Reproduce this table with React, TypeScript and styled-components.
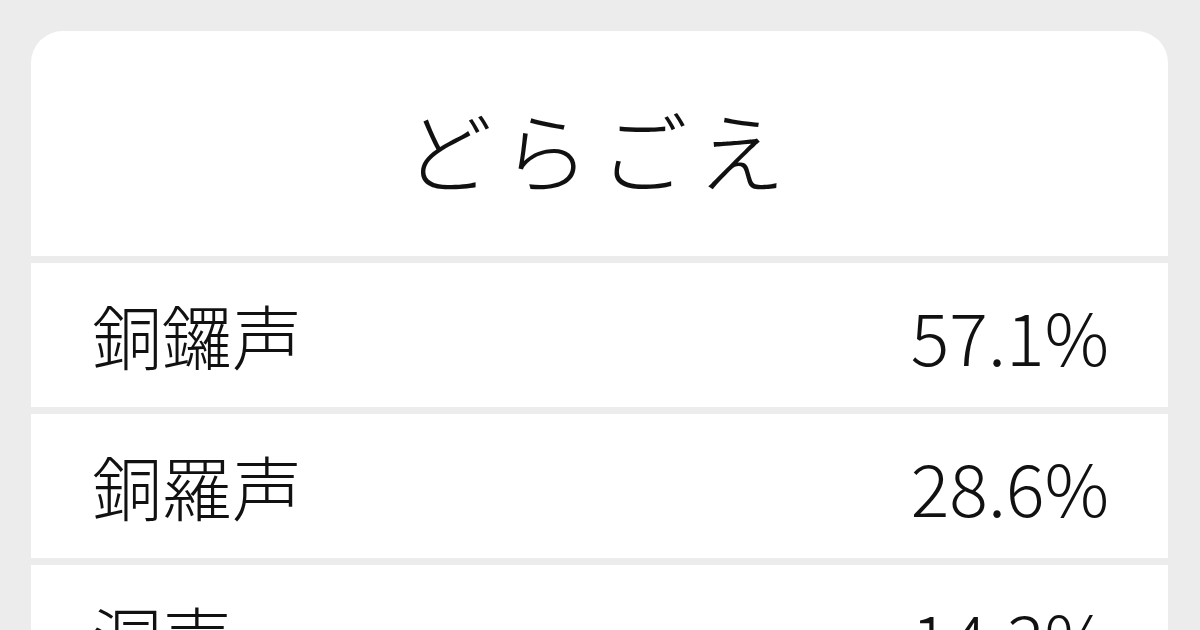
import React from "react";
import styled, { createGlobalStyle } from "styled-components";

const GlobalStyle = createGlobalStyle`
  html, body {
    margin: 0;
    padding: 0;
    background: #ececec;
  }
  body {
    font-family: "Noto Sans CJK JP", "Noto Sans", sans-serif;
    color: #111;
  }
`;

const Page = styled.div`
  width: 1200px;
  height: 630px;
  overflow: hidden;
  padding: 31px 32px 0 31px;
  box-sizing: border-box;
`;

const Card = styled.div`
  display: flex;
  flex-direction: column;
  gap: 7px;
  border-radius: 32px 32px 0 0;
  overflow: hidden;
`;

const TitleBlock = styled.div`
  height: 225px;
  background: #fff;
  display: flex;
  justify-content: center;
  align-items: center;
  padding-top: 8px;
  box-sizing: border-box;
`;

const Title = styled.h1`
  margin: 0;
  font-size: 88px;
  font-weight: 300;
  letter-spacing: 0.11em;
  line-height: 1;
`;

const Row = styled.div`
  height: 144px;
  background: #fff;
  display: flex;
  justify-content: space-between;
  align-items: center;
  padding: 0 59px 0 61px;
  box-sizing: border-box;
  font-weight: 300;
  line-height: 1;
`;

const Word = styled.span`
  font-size: 70px;
`;

const Rate = styled.span`
  font-size: 72px;
`;

const rows = [
  { word: "銅鑼声", rate: "57.1%" },
  { word: "銅羅声", rate: "28.6%" },
  { word: "洞声", rate: "14.3%" },
];

const App = () => {
  return (
    <>
      <GlobalStyle />
      <Page>
        <Card>
          <TitleBlock>
            <Title>どらごえ</Title>
          </TitleBlock>
          {rows.map((r) => (
            <Row key={r.word}>
              <Word>{r.word}</Word>
              <Rate>{r.rate}</Rate>
            </Row>
          ))}
        </Card>
      </Page>
    </>
  );
};

export default App;
